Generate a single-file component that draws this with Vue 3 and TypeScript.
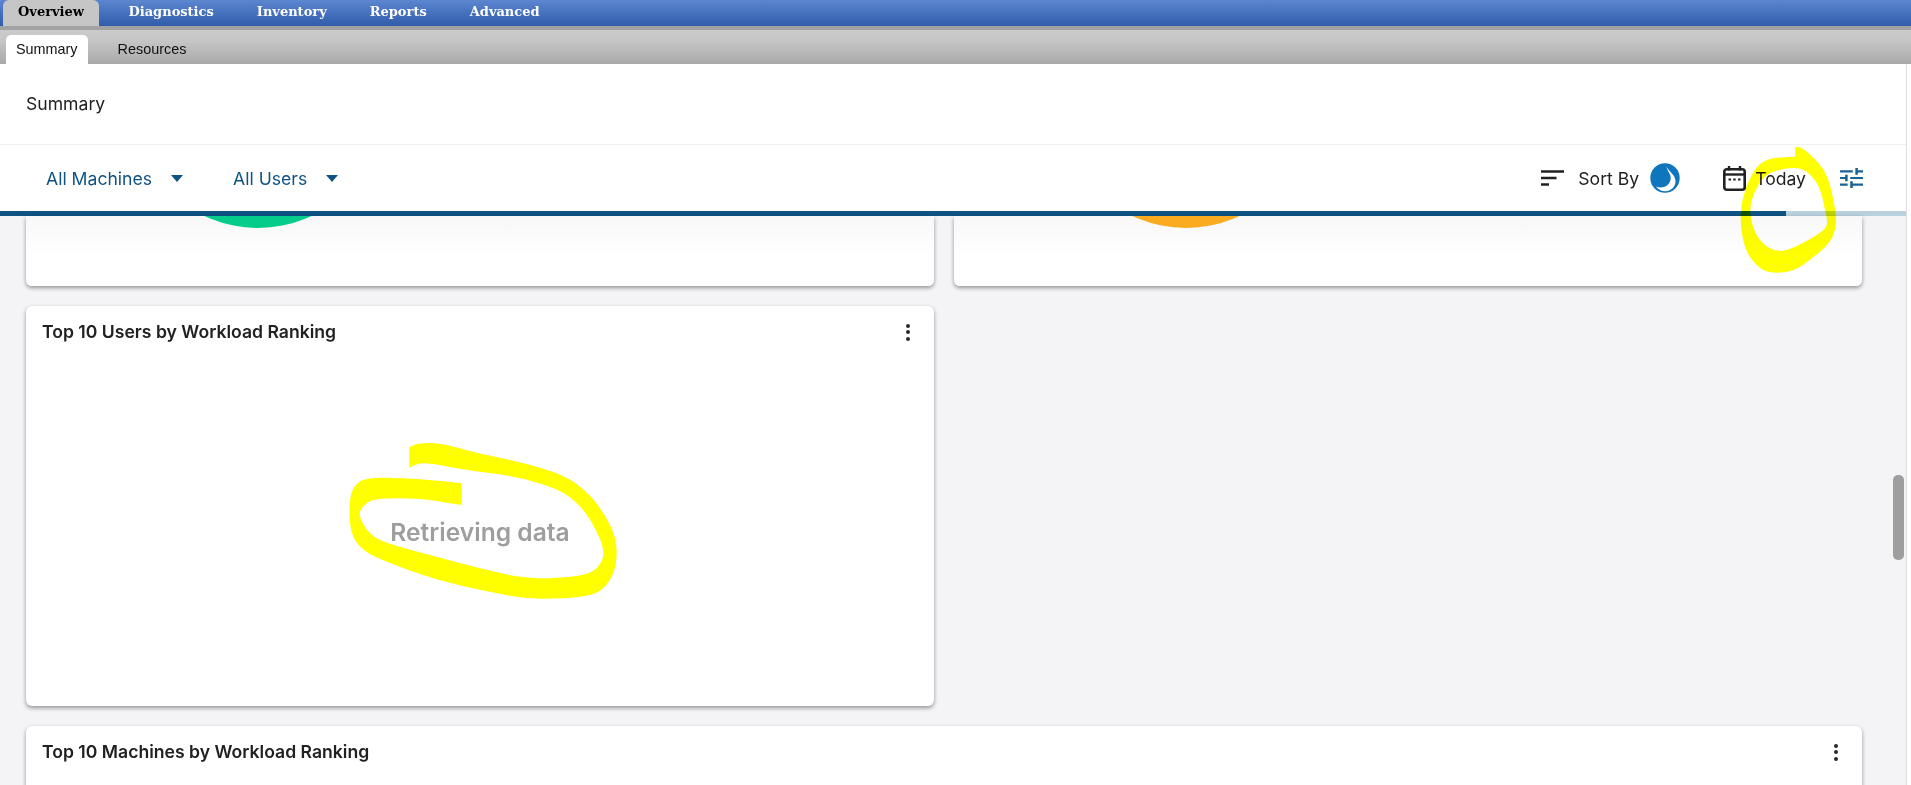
<script setup lang="ts">
type Pt = [number, number]

const mainTabs: string[] = ['Overview', 'Diagnostics', 'Inventory', 'Reports', 'Advanced']
const subTabs: string[] = ['Summary', 'Resources']

// Freehand marker strokes: each traced outline is rounded off through its edge midpoints.
function smooth(points: Pt[]): string {
  const mid = (a: Pt, b: Pt): Pt => [(a[0] + b[0]) / 2, (a[1] + b[1]) / 2]
  const n = points.length
  const start = mid(points[n - 1], points[0])
  let d = `M${start[0]} ${start[1]}`
  points.forEach((p, i) => {
    const m = mid(p, points[(i + 1) % n])
    d += `Q${p[0]} ${p[1]} ${m[0]} ${m[1]}`
  })
  return d + 'Z'
}

const ringOuter: Pt[] = [[885, 50], [885, 50], [905, 52], [950, 90], [985, 140], [1005, 230], [1010, 290], [990, 340], [930, 390], [880, 425], [810, 430], [770, 410], [735, 360], [720, 280], [725, 210], [750, 140], [790, 85], [885, 80], [885, 80]]
const ringInner: Pt[] = [[880, 112], [830, 120], [790, 140], [760, 190], [748, 240], [760, 300], [790, 345], [835, 368], [890, 350], [960, 310], [985, 285], [975, 240], [960, 170], [920, 120]]
const loop: Pt[] = [[268, 80], [268, 80], [300, 68], [370, 70], [470, 100], [600, 125], [730, 165], [790, 205], [840, 260], [890, 350], [890, 440], [860, 500], [810, 530], [640, 540], [500, 515], [350, 480], [210, 430], [130, 395], [90, 340], [88, 240], [100, 200], [135, 172], [280, 175], [425, 190], [425, 190], [425, 255], [425, 255], [300, 235], [160, 235], [125, 260], [115, 290], [150, 345], [200, 370], [330, 405], [480, 445], [620, 478], [780, 470], [830, 450], [858, 400], [820, 310], [770, 245], [710, 205], [590, 170], [440, 150], [330, 130], [295, 130], [268, 143], [268, 143]]

const ringPath = smooth(ringOuter) + smooth(ringInner)
const loopPath = smooth(loop)
</script>

<template>
  <div class="page">
    <nav class="main-nav">
      <span v-for="(t, i) in mainTabs" :key="t" class="main-tab" :class="{ active: i === 0 }">{{ t }}</span>
    </nav>
    <nav class="sub-nav">
      <span v-for="(t, i) in subTabs" :key="t" class="sub-tab" :class="{ active: i === 0 }">{{ t }}</span>
    </nav>
    <div class="frame">
      <div class="scroll-col">
        <header class="title-bar">Summary</header>
        <div class="filter-bar">
          <div class="filter-left">
            <span class="filter">All Machines<i class="caret"></i></span>
            <span class="filter">All Users<i class="caret"></i></span>
          </div>
          <div class="filter-right">
            <svg class="sort-icon" width="23" height="16" viewBox="0 0 23 16"><path d="M0 1.500h23M0 8h15.500M0 14.500h8" stroke="#212121" stroke-width="2.500" fill="none" /></svg>
            <span class="label sort-label">Sort By</span>
            <svg class="drop-icon" width="30" height="30" viewBox="0 0 30 30">
              <circle cx="15" cy="15" r="14.700" fill="#0f75bc" />
              <path d="M15.700 1.700C16.500 7 25.500 11 25.500 18C25.500 24 20.500 28.300 15.500 28.300C11.500 28.300 8 26.500 6 23.500C9 24.800 13.500 24.800 16.700 22.800C19.800 20.500 21.300 17 20.500 13C19.500 9.500 16.700 6.500 15.700 1.700Z" fill="#fff" />
            </svg>
            <svg class="cal-icon" width="23" height="25" viewBox="0 0 23 25">
              <rect x="1.300" y="3.300" width="20.400" height="20.400" rx="2.500" fill="none" stroke="#212121" stroke-width="2.600" />
              <path d="M1.500 8.500h20" stroke="#212121" stroke-width="2.400" />
              <path d="M6 0v4.500M17 0v4.500" stroke="#212121" stroke-width="2.400" />
              <path d="M5.500 13.500h2.500M10.200 13.500h2.500M15 13.500h2.500" stroke="#212121" stroke-width="2" />
            </svg>
            <span class="label today-label">Today</span>
            <svg class="tune-icon" width="23" height="20" viewBox="3 3 18 18" preserveAspectRatio="none">
              <path fill="#1b6396" d="M3 17v2h6v-2H3zM3 5v2h10V5H3zm10 16v-2h8v-2h-8v-2h-2v6h2zM7 9v2H3v2h4v2h2V9H7zm14 4v-2H11v2h10zm-6-4h2V7h4V5h-4V3h-2v6z" />
            </svg>
          </div>
        </div>
        <div class="progress"><div class="progress-fill"></div></div>
        <main class="content">
          <div class="row top-row">
            <section class="card partial">
              <div class="gauge green"></div>
            </section>
            <section class="card partial">
              <div class="gauge orange"></div>
            </section>
          </div>
          <div class="row">
            <section class="card ranking">
              <div class="card-head">
                <h2>Top 10 Users by Workload Ranking</h2>
                <span class="dots"><i></i><i></i><i></i></span>
              </div>
              <div class="card-body">Retrieving data</div>
            </section>
            <div class="empty-cell"></div>
          </div>
          <section class="card wide">
            <div class="card-head">
              <h2>Top 10 Machines by Workload Ranking</h2>
              <span class="dots"><i></i><i></i><i></i></span>
            </div>
          </section>
        </main>
        <div class="scroll-thumb"></div>
      </div>
      <div class="gutter"></div>
    </div>

    <svg class="ink" width="1911" height="785" viewBox="0 0 1911 785">
      <g transform="translate(1500 130) scale(0.33333)">
        <path fill="#ffff00" fill-rule="evenodd" :d="ringPath" />
      </g>
      <g transform="translate(320 420) scale(0.33333)">
        <path fill="#ffff00" :d="loopPath" />
      </g>
    </svg>
  </div>
</template>

<style>
html, body { margin: 0; padding: 0; background: #fff; }
</style>

<style scoped>
.page {
  position: relative;
  width: 1911px;
  height: 785px;
  overflow: hidden;
  display: flex;
  flex-direction: column;
  font-family: Inter, "Liberation Sans", sans-serif;
  background: #fff;
}
.main-nav {
  height: 26px;
  flex: none;
  display: flex;
  align-items: flex-end;
  padding-left: 3px;
  box-sizing: border-box;
  background: linear-gradient(#5d86d0, #2f5cab);
  font-family: "DejaVu Serif", serif;
  font-weight: 700;
  font-size: 13px;
}
.main-tab {
  color: #fff;
  height: 26px;
  line-height: 24px;
  padding: 0 21.500px;
  box-sizing: border-box;
}
.main-tab.active {
  color: #000;
  background: #c6c6c6;
  border-radius: 6px 6px 0 0;
  padding: 0 15px;
  margin-right: 8px;
}
.sub-nav {
  height: 38px;
  flex: none;
  box-sizing: border-box;
  padding: 5px 0 0 6px;
  display: flex;
  background: linear-gradient(#cbcbcb 0, #c6c6c6 30%, #a9a9a9 100%);
  border-top: 4px solid #a2a2a2;
  font-family: "Liberation Sans", sans-serif;
  font-size: 14.400px;
  color: #111;
}
.sub-tab {
  padding: 0 10px;
  height: 29px;
  line-height: 28px;
  margin-left: 20px;
}
.sub-tab.active {
  background: #fff;
  border-radius: 5px 5px 0 0;
  margin-left: 0;
}
.frame {
  flex: 1;
  display: flex;
  min-height: 0;
}
.scroll-col {
  position: relative;
  width: 1906px;
  flex: none;
  display: flex;
  flex-direction: column;
  overflow: hidden;
}
.gutter {
  flex: 1;
  border-left: 1px solid #e0e0e3;
  background: #fff;
}
.title-bar {
  height: 81px;
  flex: none;
  box-sizing: border-box;
  padding-left: 26px;
  line-height: 80px;
  font-size: 17.600px;
  color: #212121;
  background: #fff;
  border-bottom: 1px solid #f0f0f2;
}
.filter-bar {
  height: 66px;
  flex: none;
  display: flex;
  justify-content: space-between;
  align-items: center;
  background: #fff;
  padding: 0 43px 0 46px;
}
.filter-left { display: flex; gap: 50px; }
.filter {
  display: flex;
  align-items: center;
  gap: 19px;
  font-size: 17.600px;
  color: #0f5384;
}
.caret {
  width: 0;
  height: 0;
  border-left: 6px solid transparent;
  border-right: 6px solid transparent;
  border-top: 7px solid #0f5384;
}
.filter-right { display: flex; align-items: center; }
.label { font-size: 17.600px; color: #212121; }
.sort-label { margin-left: 14px; }
.drop-icon { margin-left: 11px; }
.cal-icon { margin-left: 43px; }
.today-label { margin-left: 9px; }
.tune-icon { margin-left: 34px; }
.progress {
  height: 5px;
  flex: none;
  background: #b9d0dd;
}
.progress-fill {
  width: 1786px;
  height: 100%;
  background: #0f5384;
}
.content {
  flex: 1;
  min-height: 0;
  background: #f4f4f7;
  padding: 0 44px 0 26px;
  display: flex;
  flex-direction: column;
  gap: 20px;
}
.row {
  display: grid;
  grid-template-columns: 908px 908px;
  column-gap: 20px;
}
.card {
  background: #fff;
  border-radius: 6px;
  box-shadow: 0 2px 4px rgba(0, 0, 0, 0.4);
}
.partial {
  height: 70px;
  border-radius: 0 0 6px 6px;
  overflow: hidden;
  background: linear-gradient(#f7f7f8, #fff 55%);
}
.gauge {
  width: 250px;
  height: 250px;
  border-radius: 50%;
  margin-top: -238px;
  margin-left: 107px;
}
.green { background: #04cd8c; }
.orange { background: #fbab1f; }
.ranking { height: 400px; display: flex; flex-direction: column; }
.wide { height: 80px; flex: none; }
.card-head {
  display: flex;
  justify-content: space-between;
  align-items: center;
  padding: 16px 24px 0 16px;
}
h2 {
  margin: 0;
  font-size: 17.600px;
  line-height: 20px;
  font-weight: 600;
  color: #212121;
}
.dots { display: flex; flex-direction: column; gap: 2.500px; }
.dots i {
  width: 4px;
  height: 4px;
  border-radius: 50%;
  background: #2a2a2a;
}
.card-body {
  flex: 1;
  display: flex;
  align-items: center;
  justify-content: center;
  padding-top: 15px;
  font-size: 24.600px;
  font-weight: 600;
  color: #9e9e9e;
}
.scroll-thumb {
  position: absolute;
  left: 1893px;
  top: 411px;
  width: 11px;
  height: 85px;
  border-radius: 5px;
  background: #9e9e9e;
}
.ink {
  position: absolute;
  left: 0;
  top: 0;
  pointer-events: none;
  mix-blend-mode: multiply;
}
</style>
